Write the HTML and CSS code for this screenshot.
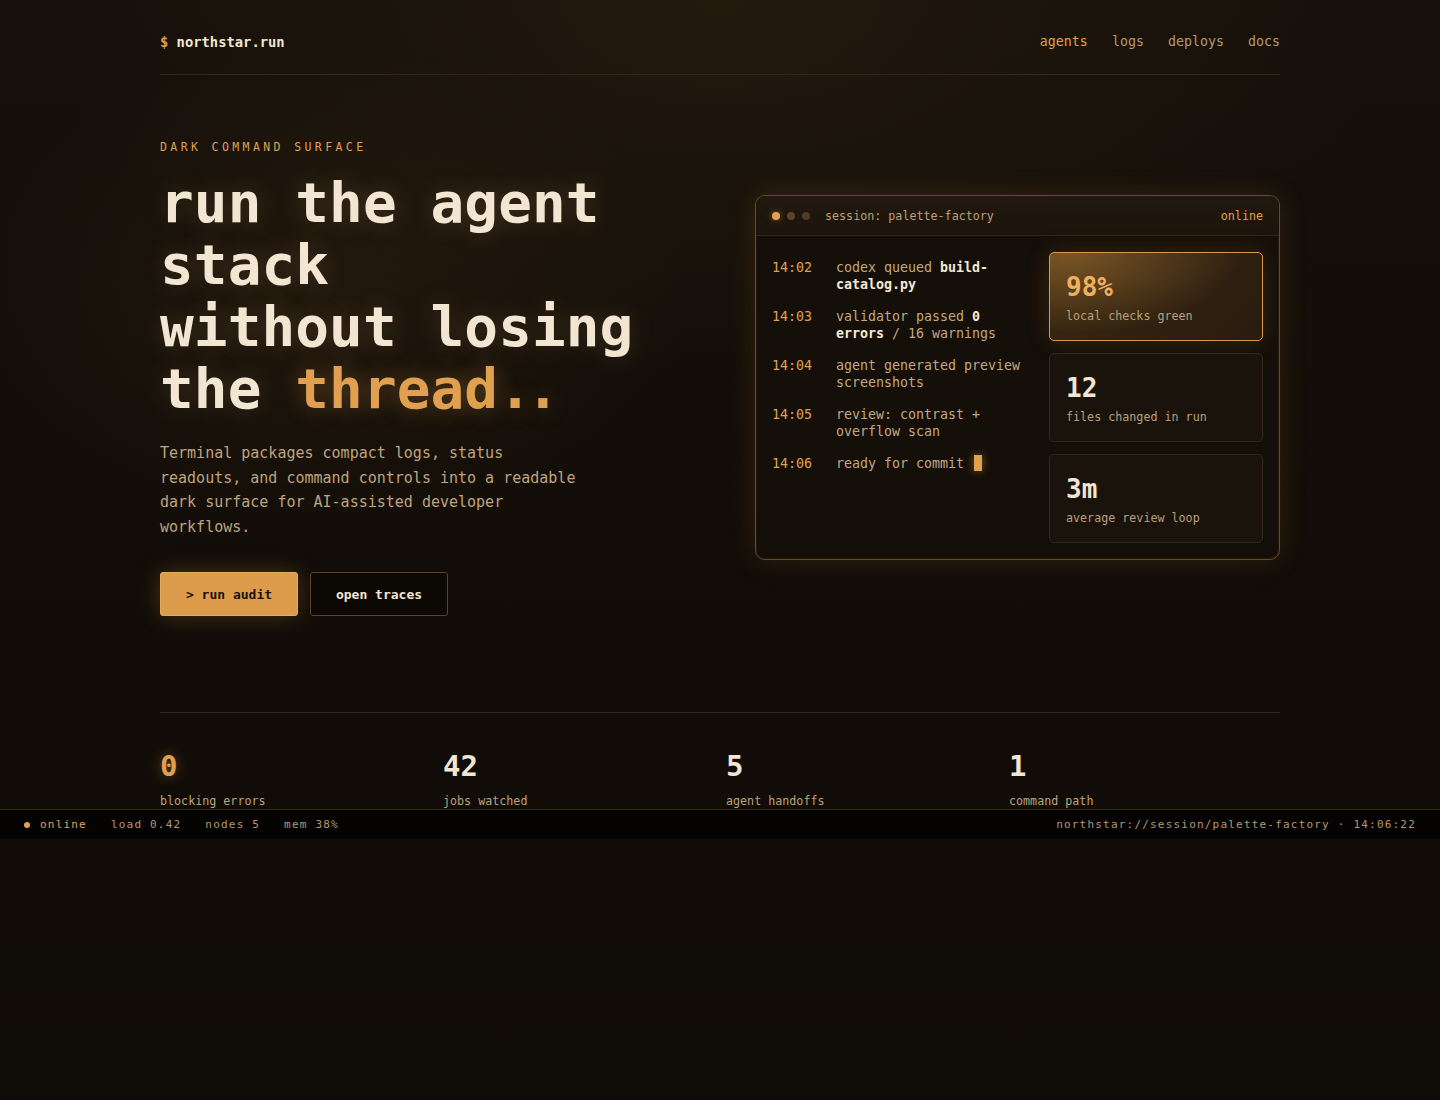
FILE: index.html
```html
<!DOCTYPE html>
<html lang="en">
<head>
<meta charset="utf-8">
<title>northstar.run</title>
<link rel="stylesheet" href="styles.css">
</head>
<body>
<div class="page">
  <header class="topbar">
    <div class="brand"><span class="prompt">$</span> northstar.run</div>
    <nav class="nav">
      <a class="nav-link active">agents</a>
      <a class="nav-link">logs</a>
      <a class="nav-link">deploys</a>
      <a class="nav-link">docs</a>
    </nav>
  </header>

  <section class="hero">
    <div class="hero-copy">
      <div class="eyebrow">DARK COMMAND SURFACE</div>
      <h1 class="headline">run the agent stack<br>without losing the <span class="accent">thread.</span><span class="accent dot">.</span></h1>
      <p class="lede">Terminal packages compact logs, status readouts, and command controls into a readable dark surface for AI-assisted developer workflows.</p>
      <div class="actions">
        <button class="btn btn-primary">&gt; run audit</button>
        <button class="btn btn-ghost">open traces</button>
      </div>
    </div>

    <div class="terminal">
      <div class="term-head">
        <div class="dots"><span class="d d1"></span><span class="d d2"></span><span class="d d3"></span></div>
        <div class="term-title">session: palette-factory</div>
        <div class="term-status">online</div>
      </div>
      <div class="term-body">
        <ul class="log">
          <li class="log-row"><span class="time">14:02</span><span class="msg">codex queued <b>build-catalog.py</b></span></li>
          <li class="log-row"><span class="time">14:03</span><span class="msg">validator passed <b>0 errors</b> / 16 warnings</span></li>
          <li class="log-row"><span class="time">14:04</span><span class="msg">agent generated preview screenshots</span></li>
          <li class="log-row"><span class="time">14:05</span><span class="msg">review: contrast + overflow scan</span></li>
          <li class="log-row"><span class="time">14:06</span><span class="msg">ready for commit <span class="cursor"></span></span></li>
        </ul>
        <div class="cards">
          <div class="card card-hot">
            <div class="card-num">98%</div>
            <div class="card-label">local checks green</div>
          </div>
          <div class="card">
            <div class="card-num">12</div>
            <div class="card-label">files changed in run</div>
          </div>
          <div class="card">
            <div class="card-num">3m</div>
            <div class="card-label">average review loop</div>
          </div>
        </div>
      </div>
    </div>
  </section>

  <section class="stats">
    <div class="stat"><div class="stat-num hot">0</div><div class="stat-label">blocking errors</div></div>
    <div class="stat"><div class="stat-num">42</div><div class="stat-label">jobs watched</div></div>
    <div class="stat"><div class="stat-num">5</div><div class="stat-label">agent handoffs</div></div>
    <div class="stat"><div class="stat-num">1</div><div class="stat-label">command path</div></div>
  </section>
</div>

<footer class="statusbar">
  <div class="sb-left">
    <span class="sb-item sb-online"><span class="sb-dot"></span>online</span>
    <span class="sb-item">load 0.42</span>
    <span class="sb-item">nodes 5</span>
    <span class="sb-item">mem 38%</span>
  </div>
  <div class="sb-right">northstar://session/palette-factory · 14:06:22</div>
</footer>
</body>
</html>
```

FILE: styles.css
```css
* { box-sizing: border-box; }

html, body {
  margin: 0;
  padding: 0;
}

body {
  min-height: 1100px;
  font-family: "DejaVu Sans Mono", "Liberation Mono", monospace;
  color: #f2e6d2;
  background:
    radial-gradient(ellipse 520px 360px at 330px 300px, rgba(150, 100, 45, 0.10), rgba(150, 100, 45, 0) 70%),
    radial-gradient(ellipse 900px 500px at 720px 0px, rgba(60, 42, 20, 0.35), rgba(60, 42, 20, 0) 75%),
    linear-gradient(180deg, #15100a 0%, #120d08 50%, #0f0b07 100%);
}

.page {
  width: 1120px;
  margin: 0 auto;
}

/* header */
.topbar {
  display: flex;
  justify-content: space-between;
  align-items: center;
  padding: 29px 0 19px;
  border-bottom: 1px solid #33271a;
  line-height: 26px;
}

.brand {
  font-size: 13.8px;
  font-weight: 700;
  color: #f2e6d2;
}

.prompt { color: #e0a050; }

.nav {
  display: flex;
  gap: 24px;
}

.nav-link {
  font-size: 13.3px;
  color: #b39874;
  text-decoration: none;
}

.nav-link.active { color: #e0a050; }

/* hero */
.hero {
  display: grid;
  grid-template-columns: 1fr 525px;
  gap: 56px;
  align-items: center;
  padding-top: 64px;
}

.eyebrow {
  font-size: 11.5px;
  line-height: 16px;
  letter-spacing: 3.4px;
  color: #e0a050;
}

.headline {
  margin: 17px 0 0;
  font-size: 56px;
  line-height: 62px;
  font-weight: 700;
  letter-spacing: 0.1px;
  color: #f2e6d2;
  text-shadow: 0 0 26px rgba(240, 200, 140, 0.18);
}

.headline .accent {
  color: #e0a050;
  text-shadow: 0 0 22px rgba(224, 160, 80, 0.35);
}

.headline .dot {
  margin-left: -6px;
}

.lede {
  margin: 21px 0 0;
  max-width: 425px;
  font-size: 15px;
  line-height: 24.5px;
  color: #bfa47e;
}

.actions {
  display: flex;
  gap: 12px;
  margin-top: 33px;
}

.btn {
  height: 44px;
  padding: 0 24px;
  font-family: inherit;
  font-size: 13px;
  font-weight: 700;
  border-radius: 3px;
  cursor: pointer;
}

.btn-primary {
  width: 138px;
  background: #dc9c4c;
  color: #1a1008;
  border: 1px solid #e6ac5e;
  box-shadow: 0 0 22px rgba(220, 150, 60, 0.28);
}

.btn-ghost {
  width: 138px;
  background: #0c0905;
  color: #f2e6d2;
  border: 1px solid #5a4127;
}

/* terminal */
.terminal {
  border: 1px solid #6a4a24;
  border-radius: 10px;
  background: #150f09;
  box-shadow: 0 0 28px rgba(210, 140, 55, 0.16), inset 0 0 0 1px rgba(120, 80, 35, 0.15);
  overflow: hidden;
}

.term-head {
  display: flex;
  align-items: center;
  height: 40px;
  padding: 0 16px;
  background: linear-gradient(180deg, #21180e, #1c140c);
  border-bottom: 1px solid #33261a;
}

.dots {
  display: flex;
  gap: 7px;
  margin-right: 15px;
}

.d {
  width: 8px;
  height: 8px;
  border-radius: 50%;
}

.d1 { background: #e0a050; box-shadow: 0 0 6px rgba(224, 160, 80, 0.5); }
.d2 { background: #5c4329; }
.d3 { background: #4e3a25; }

.term-title {
  flex: 1;
  font-size: 11.7px;
  color: #bba07a;
}

.term-status {
  font-size: 11.7px;
  color: #e0a050;
}

.term-body {
  display: grid;
  grid-template-columns: 1fr 214px;
  gap: 16px;
  padding: 16px;
}

.log {
  list-style: none;
  margin: 0;
  padding: 7px 0 0;
  display: flex;
  flex-direction: column;
  gap: 15px;
}

.log-row {
  display: grid;
  grid-template-columns: 40px 1fr;
  gap: 24px;
  font-size: 13.3px;
  line-height: 17px;
}

.time { color: #e0a050; }

.msg { color: #c2a880; }

.msg b {
  color: #f4e8d4;
  font-weight: 700;
}

.cursor {
  display: inline-block;
  width: 8px;
  height: 16px;
  margin-left: 2px;
  vertical-align: -3px;
  background: #e0a050;
  box-shadow: 0 0 8px rgba(224, 160, 80, 0.5);
}

.cards {
  display: flex;
  flex-direction: column;
  gap: 12px;
}

.card {
  padding: 18px 16px 16px;
  border: 1px solid #33271a;
  border-radius: 5px;
  background: #1a130c;
}

.card-hot {
  border-color: #d9994a;
  background:
    radial-gradient(ellipse 170px 80px at 20px 0px, rgba(200, 140, 60, 0.45), rgba(200, 140, 60, 0) 100%),
    linear-gradient(135deg, #3a2912, #281c0f);
  box-shadow: 0 0 24px rgba(210, 140, 55, 0.18);
}

.card-num {
  font-size: 26px;
  line-height: 32px;
  font-weight: 700;
  color: #f2e6d2;
}

.card-hot .card-num { color: #f0b060; }

.card-label {
  margin-top: 5px;
  font-size: 11.7px;
  line-height: 16px;
  color: #b9a07c;
}

/* stats */
.stats {
  display: grid;
  grid-template-columns: repeat(4, 1fr);
  gap: 12px;
  margin-top: 96px;
  padding-top: 35px;
  border-top: 1px solid #33271a;
}

.stat-num {
  font-size: 29px;
  line-height: 36px;
  font-weight: 700;
  color: #f2e6d2;
}

.stat-num.hot {
  color: #e0a050;
  text-shadow: 0 0 14px rgba(224, 160, 80, 0.45);
}

.stat-label {
  margin-top: 9px;
  font-size: 11.7px;
  line-height: 16px;
  color: #bca27c;
}

/* status bar */
.statusbar {
  display: flex;
  justify-content: space-between;
  align-items: center;
  height: 30px;
  padding: 0 24px;
  background: #050302;
  border-top: 1px solid #3a2b1a;
  font-size: 11px;
  letter-spacing: 1.2px;
  color: #b39874;
}

.sb-left {
  display: flex;
  gap: 24px;
}

.sb-online {
  display: flex;
  align-items: center;
  color: #e0a050;
}

.sb-dot {
  width: 6px;
  height: 6px;
  margin-right: 10px;
  border-radius: 50%;
  background: #e0a050;
}
```
